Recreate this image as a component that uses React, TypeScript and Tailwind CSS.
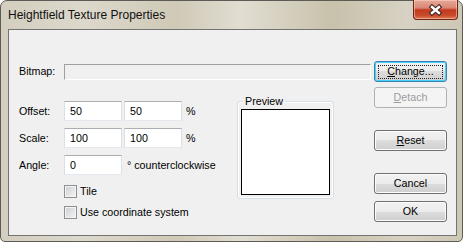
const font = { fontFamily: '"Liberation Sans", Arial, sans-serif' };

function Btn({
  label,
  hot,
  focused,
  disabled,
  className = "",
}: {
  label: string;
  hot?: number;
  focused?: boolean;
  disabled?: boolean;
  className?: string;
}) {
  const text =
    hot === undefined ? (
      label
    ) : (
      <>
        {label.slice(0, hot)}
        <span className="underline underline-offset-[1px]">{label[hot]}</span>
        {label.slice(hot + 1)}
      </>
    );

  if (disabled) {
    return (
      <div
        className={`flex h-[21px] w-[73px] items-center justify-center rounded-[3px] border border-[#adb2b5] bg-[#f4f4f4] text-[10.7px] text-[#9c9c9c] ${className}`}
      >
        <span>{text}</span>
      </div>
    );
  }

  return (
    <div
      className={`flex h-[21px] w-[73px] items-center justify-center rounded-[3px] border text-[10.7px] text-black bg-[image:linear-gradient(#f2f2f2_0%,#ebebeb_50%,#dddddd_50%,#cfcfcf_100%)] ${
        focused
          ? "border-[#3c7fb1] shadow-[inset_0_0_0_1px_#48d2f8]"
          : "border-[#707070] shadow-[inset_0_0_0_1px_#fcfcfc]"
      } ${className}`}
    >
      {focused ? (
        <span className="flex h-[14px] w-[65px] items-center justify-center border border-dotted border-[#222]">
          {text}
        </span>
      ) : (
        <span>{text}</span>
      )}
    </div>
  );
}

function Field({ value }: { value: string }) {
  return (
    <div className="flex h-[20px] w-[58px] items-center border border-[#abadb3] border-x-[#dbdfe6] border-b-[#e3e9ef] bg-white pl-[5px] text-[10.7px]">
      {value}
    </div>
  );
}

function Check({ label }: { label: string }) {
  return (
    <div className="flex items-center">
      <div className="h-[13px] w-[13px] border border-[#8e8f8f] bg-[image:linear-gradient(135deg,#c9cdd3,#f6f6f6)] shadow-[inset_0_0_0_1px_#f4f4f4]" />
      <span className="ml-[3px] text-[10.7px] leading-[13px]">{label}</span>
    </div>
  );
}

export default function App() {
  return (
    <div className="h-[244px] w-[465px] bg-white" style={font}>
      <div className="flex h-[242px] w-[463px] flex-col rounded-t-[7px] rounded-b-[5px] border border-[#5d5b55] bg-[image:linear-gradient(90deg,#d3cebf_0%,#dcd8cb_18%,#cfc9b6_38%,#e1ddd1_52%,#c8c1ab_72%,#d7d2c3_88%,#cdc7b4_100%)]">
        {/* title bar */}
        <div className="flex h-[28px] shrink-0">
          <span className="pl-[7px] pt-[6px] text-[12px] leading-[16px] text-[#111]">
            Heightfield Texture Properties
          </span>
          <div className="ml-auto mr-[4px] -mt-px flex h-[20px] w-[45px] items-center justify-center rounded-b-[4px] border border-t-0 border-[#6e2417] bg-[image:linear-gradient(#e8a899_0%,#d98673_42%,#c2391f_52%,#c84a2a_80%,#dd7a52_100%)] shadow-[inset_0_0_0_1px_rgba(255,220,200,0.5)]">
            <svg width="15" height="12" viewBox="0 0 15 12">
              <path d="M4 3 L11 9 M11 3 L4 9" stroke="#3a2420" strokeWidth="4.5" strokeLinecap="square" />
              <path d="M4 3 L11 9 M11 3 L4 9" stroke="#ffffff" strokeWidth="2.4" strokeLinecap="square" />
            </svg>
          </div>
        </div>

        {/* client area */}
        <div className="ml-[7px] h-[207px] w-[449px] border border-[#737373] bg-[#f0f0f0] text-black">
          <div className="flex items-center pl-[10px] pt-[31px]">
            <span className="w-[45px] text-[10.7px]">Bitmap:</span>
            <div className="h-[16px] w-[307px] border border-[#a0a0a0] border-b-white border-r-white" />
            <Btn label="Change..." hot={0} focused className="ml-[3px]" />
          </div>

          <div className="mt-[5px] flex pl-[10px]">
            <div className="mt-[14px] flex w-[218px] flex-col text-[10.7px]">
              <div className="flex h-[20px] items-center">
                <span className="w-[45px]">Offset:</span>
                <Field value="50" />
                <div className="ml-[2px]">
                  <Field value="50" />
                </div>
                <span className="ml-[4px]">%</span>
              </div>
              <div className="mt-[7px] flex h-[20px] items-center">
                <span className="w-[45px]">Scale:</span>
                <Field value="100" />
                <div className="ml-[2px]">
                  <Field value="100" />
                </div>
                <span className="ml-[4px]">%</span>
              </div>
              <div className="mt-[7px] flex h-[20px] items-center">
                <span className="w-[45px]">Angle:</span>
                <Field value="0" />
                <span className="ml-[5px]">° counterclockwise</span>
              </div>
              <div className="ml-[45px] mt-[10px] flex flex-col gap-[8px]">
                <Check label="Tile" />
                <Check label="Use coordinate system" />
              </div>
            </div>

            <div className="relative mt-[14px] h-[98px] w-[97px] rounded-[3px] border border-[#d5dfe5] shadow-[inset_0_0_0_1px_#ffffff] px-[3px] pt-[7px]">
              <span className="absolute -top-[7px] left-[5px] bg-[#f0f0f0] px-[2px] text-[10.7px] leading-[13px]">
                Preview
              </span>
              <div className="h-[86px] w-[89px] border border-black bg-white" />
            </div>

            <div className="ml-[40px] flex w-[73px] flex-col">
              <Btn label="Detach" hot={0} disabled />
              <Btn label="Reset" hot={0} className="mt-[22px]" />
              <Btn label="Cancel" className="mt-[22px]" />
              <Btn label="OK" className="mt-[7px]" />
            </div>
          </div>
        </div>
      </div>
    </div>
  );
}
